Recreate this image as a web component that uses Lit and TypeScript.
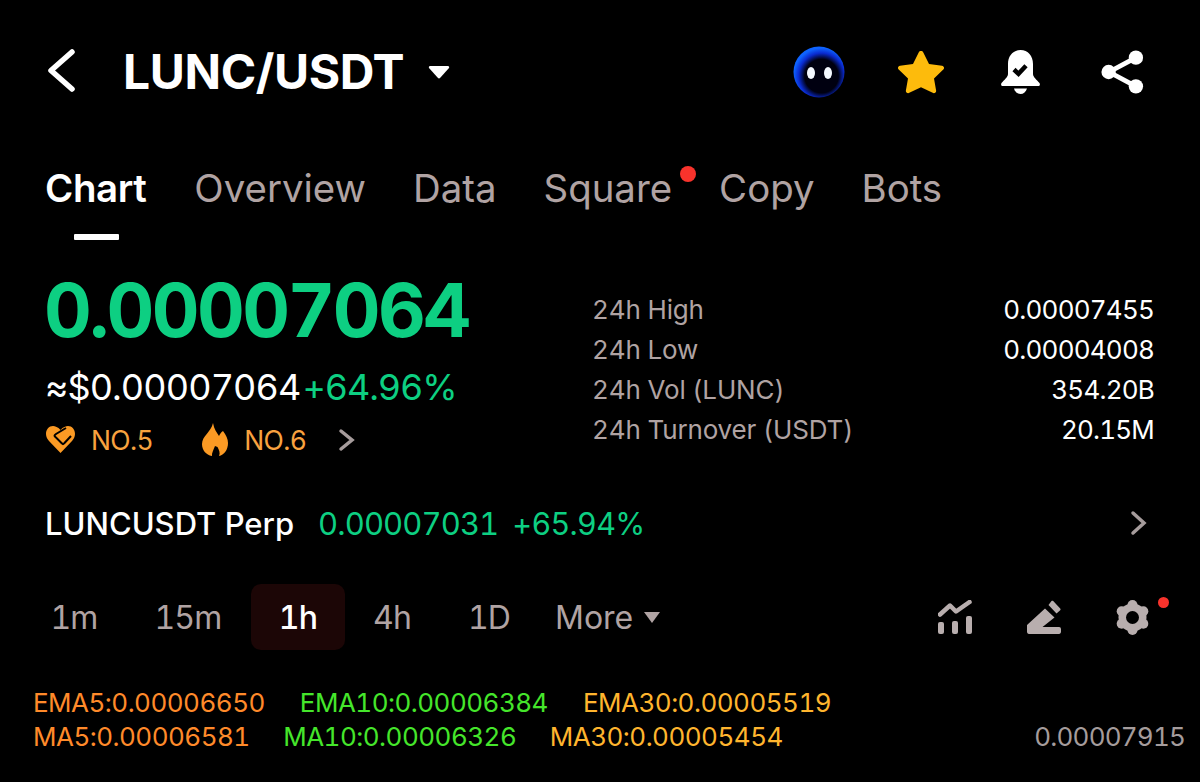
import { LitElement, html, css, svg } from "lit";
import { customElement } from "lit/decorators.js";

const stats = [
  ["24h High", "0.00007455"],
  ["24h Low", "0.00004008"],
  ["24h Vol (LUNC)", "354.20B"],
  ["24h Turnover (USDT)", "20.15M"],
];

@customElement("app-root")
export class AppRoot extends LitElement {
  static styles = css`
    :host { display: block; width: 1200px; height: 782px; background: #000; color: #fff; overflow: hidden;
      font-family: Inter, "Liberation Sans", sans-serif; font-variant-numeric: tabular-nums; }
    svg { display: block; flex: none; }
    .header { height: 144px; box-sizing: border-box; padding: 0 56px 0 46px; display: flex; align-items: center; }
    .title { font-size: 48px; font-weight: 700; margin-left: 47px; letter-spacing: -0.4px; line-height: 1; }
    .caret { margin-left: 24px; }
    .actions { margin-left: auto; display: flex; align-items: center; }
    .tabs { height: 100px; box-sizing: border-box; padding: 23px 0 0 45px; display: flex; gap: 47px; font-size: 38.400px; color: #b0a3a3; line-height: 42px; }
    .tab { position: relative; }
    .tab.on { color: #fff; font-weight: 600; letter-spacing: -0.4px; margin-right: 1px; }
    .tab.on::after { content: ""; position: absolute; left: 29px; width: 45px; height: 6px; top: 67px; background: #fff; border-radius: 1px; }
    .tab.dot::after { content: ""; position: absolute; right: -24px; top: -1px; width: 16px; height: 16px; border-radius: 50%; background: #f8332c; }
    .market { display: flex; padding: 0 46px; height: 250px; }
    .left { width: 546px; }
    .price { font-size: 74px; font-weight: 700; color: #0dcf82; line-height: 80px; margin: 26px 0 0 -2px; letter-spacing: -2.600px; }
    .sub { display: flex; font-size: 36px; line-height: 44px; margin-top: 15px; letter-spacing: -0.9px; margin-left: -1px; }
    .up { color: #0dcf82; margin-left: 2px; letter-spacing: -1.100px; }
    .rank { display: flex; align-items: center; margin-top: 14px; font-size: 26.500px; letter-spacing: -0.6px; color: #f8a23f; line-height: 32px; }
    .rank svg { margin-right: 16px; }
    .rank span { margin-right: 49px; }
    .rank span.last { margin-right: 32px; }
    .stats { flex: 1; padding-top: 46px; font-size: 26px; color: #b0a3a3; }
    .stat { display: flex; justify-content: space-between; height: 40px; line-height: 40px; }
    .stat span { letter-spacing: -0.15px; }
    .stat b { font-weight: 400; color: #fff; letter-spacing: -0.8px; }
    .perp { display: flex; align-items: center; padding: 0 52px 0 45px; height: 58px; font-size: 31px; }
    .perp .nm { font-weight: 500; margin-right: 24px; }
    .perp .gr { color: #0dcf82; margin-right: 14px; font-size: 31px; letter-spacing: -0.9px; }
    .perp .pc { font-size: 30.500px; letter-spacing: -0.7px; }
    .perp svg { margin-left: auto; }
    .bar { display: flex; align-items: center; height: 66px; margin-top: 32px; padding: 0 24px 0 27px; font-size: 32px; color: #b0a3a3; }
    .tf { width: 94px; height: 66px; display: flex; align-items: center; justify-content: center; border-radius: 10px; letter-spacing: -0.8px; }
    .tf.on { background: #1c0606; color: #fff; font-weight: 500; }
    .tf.b { margin-left: 20px; } .tf.on { margin-left: 16px; } .tf.d { margin-left: 3px; }
    .more { display: flex; align-items: center; gap: 11px; margin-left: 19px; font-size: 32px; }
    .tools { margin-left: auto; display: flex; align-items: center; gap: 55px; position: relative; padding-right: 27px; }
    .tools i { position: absolute; right: 7px; top: -3px; width: 11px; height: 11px; border-radius: 50%; background: #f8332c; }
    .ma { display: flex; align-items: flex-end; justify-content: space-between; padding: 0 15px 0 33px; margin-top: 36px; font-size: 26px; line-height: 34px; }
    .ma-row { display: flex; letter-spacing: -0.52px; }
    .sp { margin-left: 35px; }
    .ma-row.short .sp { margin-left: 33.500px; }
    .o { color: #ff8a2a; } .g { color: #45e62b; } .y { color: #ffb52e; }
    .axis { color: #a59c9c; line-height: 34px; font-size: 26px; letter-spacing: -0.8px; }
  `;

  private star = svg`<path d="M23 1c1 0 1.800.5 2.300 1.500l5.700 12.200 13 1.800c2 .3 2.700 2.600 1.300 4l-9.300 9.200 2.100 12.600c.4 2-1.700 3.500-3.400 2.500L23 39l-11.700 5.800c-1.700 1-3.800-.5-3.400-2.500L10 29.700.7 20.500c-1.400-1.400-.7-3.700 1.300-4l13-1.800 5.700-12.200C21.200 1.500 22 1 23 1z" fill="#fdbb0c"/>`;

  render() {
    return html`
      <div class="header">
        <svg width="30" height="46" viewBox="0 0 30 46"><path d="M26 3 5 21.500 26 40" fill="none" stroke="#fff" stroke-width="5.500" stroke-linecap="round" stroke-linejoin="round"/></svg>
        <div class="title">LUNC/USDT</div>
        <svg class="caret" width="22" height="14" viewBox="0 0 22 14"><path d="M2 1h18c1 0 1.500 1 1 2l-9 10c-.5.500-1.500.500-2 0L1 3c-.5-1 0-2 1-2z" fill="#fff"/></svg>
        <div class="actions">
          <svg width="52" height="52" viewBox="0 0 52 52">
            <defs><radialGradient id="a" cx=".55" cy=".58" r=".55"><stop offset=".6" stop-color="#000010"/><stop offset=".82" stop-color="#0a2bd0"/><stop offset="1" stop-color="#0e63ff"/></radialGradient></defs>
            <circle cx="26" cy="26" r="25.500" fill="url(#a)"/><ellipse cx="18" cy="27" rx="4" ry="6" fill="#f4f8ff"/><ellipse cx="35" cy="27" rx="4" ry="6" fill="#f4f8ff"/>
          </svg>
          <svg style="margin-left:53px" width="46" height="44" viewBox="0 0 46 46" preserveAspectRatio="none">${this.star}</svg>
          <svg style="margin-left:57px" width="39" height="44" viewBox="0 0 39 44">
            <path d="M19.500 0C27 0 32 6 32 14v10c0 3 4 6 6.500 9 1 2 0 3-1.500 3H2C.5 36-.5 35 .5 33 3 30 7 27 7 24V14C7 6 12 0 19.500 0z" fill="#fff"/>
            <path d="M13 19.500l4.500 4.300 7.500-8" fill="none" stroke="#000" stroke-width="4.500"/>
            <path d="M13 38.500h13c-1 3.500-3.500 5.500-6.500 5.500S14 42 13 38.500z" fill="#fff"/>
          </svg>
          <svg style="margin-left:61px" width="43" height="44" viewBox="0 0 44 46">
            <path d="M36 8 8 23l28 15" fill="none" stroke="#fff" stroke-width="5"/><circle cx="36" cy="8" r="7.500" fill="#fff"/><circle cx="7.500" cy="23" r="7.500" fill="#fff"/><circle cx="36" cy="38" r="7.500" fill="#fff"/>
          </svg>
        </div>
      </div>
      <div class="tabs">
        <div class="tab on">Chart</div><div class="tab">Overview</div><div class="tab">Data</div><div class="tab dot">Square</div><div class="tab">Copy</div><div class="tab">Bots</div>
      </div>
      <div class="market">
        <div class="left">
          <div class="price">0.00007064</div>
          <div class="sub"><span>≈$0.00007064</span><span class="up">+64.96%</span></div>
          <div class="rank">
            <svg width="29" height="27" viewBox="0 0 29 27">
              <path d="M14.500 4C12 1 9 0 7 0 3 0 0 3.500 0 8c0 3 1.500 5 3 7l11.500 12L26 15c1.500-2 3-4 3-7 0-4.500-3-8-7-8-2 0-5 1-7.500 4z" fill="#fb9a24"/>
              <path d="M20 2 10 8c-2 1.500-2 2 0 3.500l5.500 5.500c1.500 1.500 1.500 1.500 3 0L25 10" fill="none" stroke="#000" stroke-width="2"/>
            </svg>
            <span>NO.5</span>
            <svg width="26" height="33" viewBox="0 0 26 33"><path d="M11 0c1 6 4 10 6 13 1-2 2-4 4-5 3 4 5 8 5 12 0 7-4 12-9 13 1.500-3 0-6-1.500-9L13 23c-1.500 4-3.500 7-3 10C4 32 0 27 0 21 0 13 9 9 11 0z" fill="#fb9a24"/></svg>
            <span class="last">NO.6</span>
            <svg style="margin:0" width="18" height="24" viewBox="0 0 18 24"><path d="M3 3l11 9-11 9" fill="none" stroke="#a69c9c" stroke-width="3.500" stroke-linecap="round"/></svg>
          </div>
        </div>
        <div class="stats">
          ${stats.map(([k, v]) => html`<div class="stat"><span>${k}</span><b>${v}</b></div>`)}
        </div>
      </div>
      <div class="perp">
        <span class="nm">LUNCUSDT Perp</span><span class="gr">0.00007031</span><span class="gr pc">+65.94%</span>
        <svg width="18" height="26" viewBox="0 0 18 26"><path d="M3 3l11 10L3 23" fill="none" stroke="#a69c9c" stroke-width="3.500" stroke-linecap="round"/></svg>
      </div>
      <div class="bar">
        <div class="tf">1m</div><div class="tf b">15m</div><div class="tf on">1h</div>
        <div class="tf">4h</div><div class="tf d">1D</div>
        <div class="more">More<svg width="16" height="11" viewBox="0 0 16 11"><path d="M0 0h16l-8 11z" fill="#b0a3a3"/></svg></div>
        <div class="tools">
          <svg width="34" height="34" viewBox="0 0 34 34" fill="#b8aeae">
            <path d="M2 14.500 12 5.500l6 6L31.500 2" fill="none" stroke="#b8aeae" stroke-width="4.500" stroke-linecap="round" stroke-linejoin="round"/>
            <rect x="0" y="22" width="6" height="12" rx="2"/><rect x="14" y="21" width="6" height="13" rx="2"/><rect x="28" y="16" width="6" height="18" rx="2"/>
          </svg>
          <svg width="34" height="34" viewBox="0 0 34 34" fill="#b8aeae">
            <path d="M0 31.500V25L18 8.500l9.500 9L15.500 27H32c1.300 0 2 .8 2 2.500v2c0 1.500-.7 2.500-2 2.500H2c-1.300 0-2-1-2-2.500z"/><path d="m21.500 5 3-4c.5-.5 1.200-.5 1.700 0l7 7.500c.5.500.5 1.200 0 1.700l-3.700 3.300z"/>
          </svg>
          <svg width="33" height="35" viewBox="0 0 33 35" fill="#b8aeae">
            <circle cx="16.500" cy="17.500" r="14"/>
            <circle cx="16.500" cy="5" r="5"/><circle cx="27.300" cy="11.250" r="5"/><circle cx="27.300" cy="23.750" r="5"/>
            <circle cx="16.500" cy="30" r="5"/><circle cx="5.700" cy="23.750" r="5"/><circle cx="5.700" cy="11.250" r="5"/>
            <circle cx="16.500" cy="17.500" r="6.500" fill="#000"/>
          </svg>
          <i></i>
        </div>
      </div>
      <div class="ma">
        <div>
          <div class="ma-row"><span class="o">EMA5:0.00006650</span><span class="g sp">EMA10:0.00006384</span><span class="y sp">EMA30:0.00005519</span></div>
          <div class="ma-row short"><span class="o">MA5:0.00006581</span><span class="g sp">MA10:0.00006326</span><span class="y sp">MA30:0.00005454</span></div>
        </div>
        <div class="axis">0.00007915</div>
      </div>
    `;
  }
}
